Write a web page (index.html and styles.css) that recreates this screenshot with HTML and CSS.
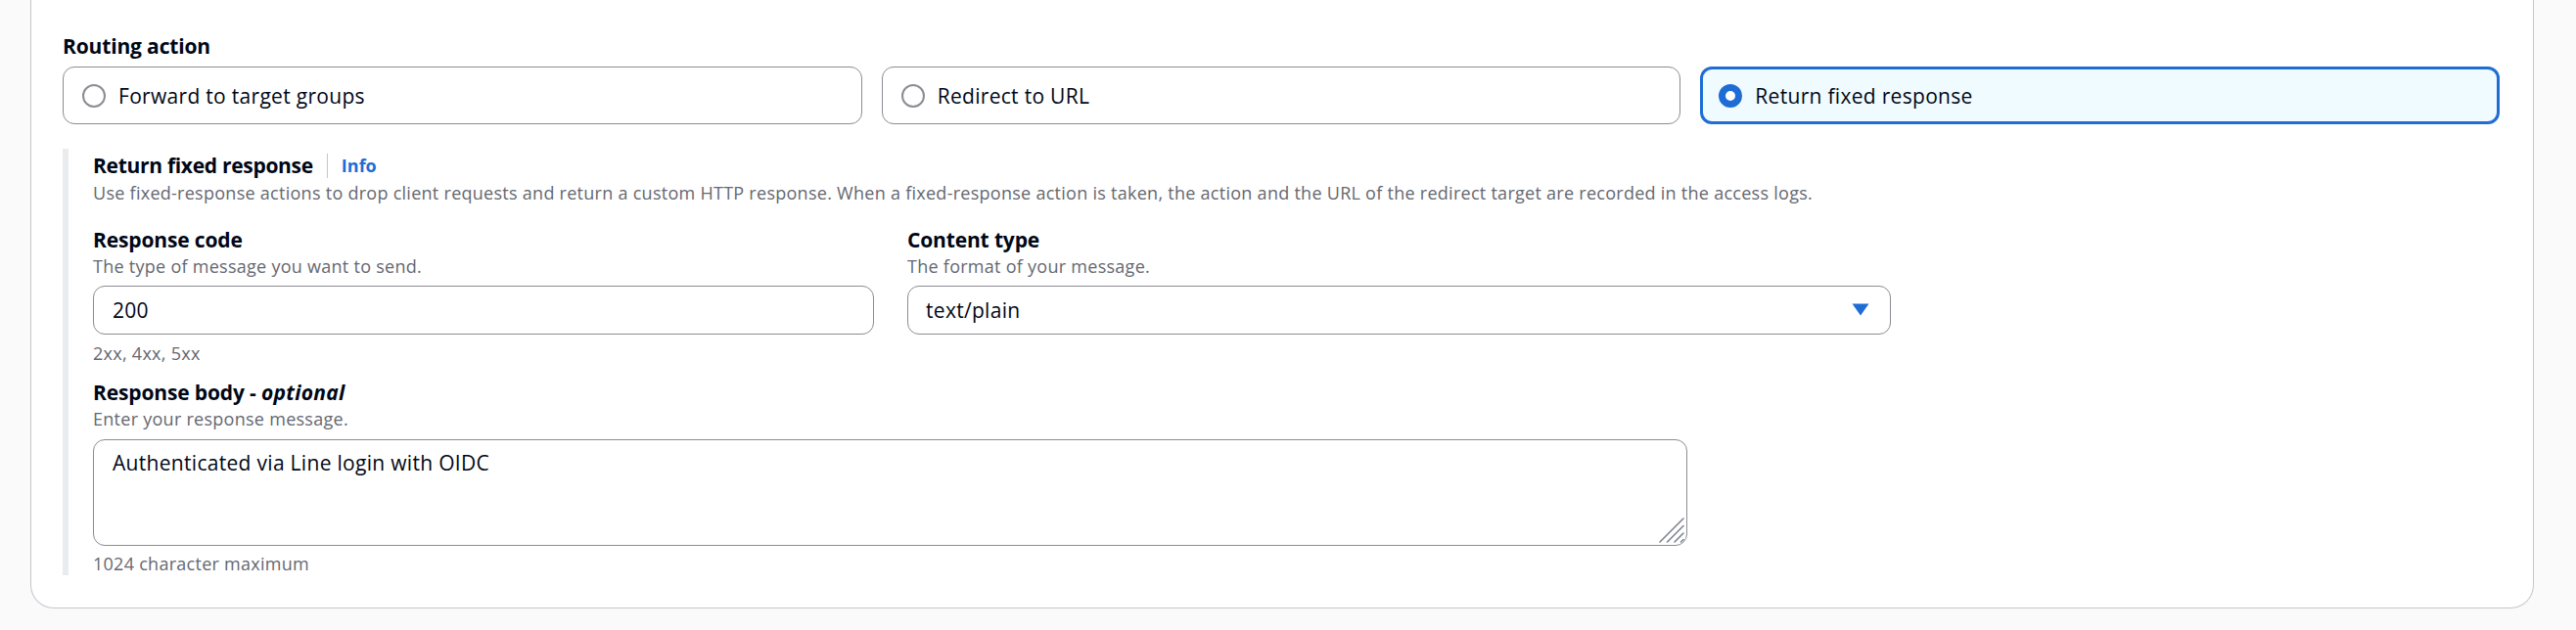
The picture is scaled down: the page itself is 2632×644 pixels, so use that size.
FILE: index.html
```html
<!DOCTYPE html>
<html lang="en">
<head>
<meta charset="utf-8">
<title>Routing action</title>
<link rel="stylesheet" href="styles.css">
</head>
<body>
<section class="card">
  <div class="label">Routing action</div>
  <div class="tiles">
    <div class="tile"><span class="radio"></span><span class="tile-text">Forward to target groups</span></div>
    <div class="tile"><span class="radio"></span><span class="tile-text">Redirect to URL</span></div>
    <div class="tile selected"><span class="radio checked"></span><span class="tile-text">Return fixed response</span></div>
  </div>
  <div class="expand">
    <div class="header"><span class="title">Return fixed response</span><span class="sep"></span><span class="info">Info</span></div>
    <div class="desc">Use fixed-response actions to drop client requests and return a custom HTTP response. When a fixed-response action is taken, the action and the URL of the redirect target are recorded in the access logs.</div>
    <div class="row">
      <div class="col col-code">
        <div class="label">Response code</div>
        <div class="desc">The type of message you want to send.</div>
        <div class="control input">200</div>
        <div class="hint">2xx, 4xx, 5xx</div>
      </div>
      <div class="col col-type">
        <div class="label">Content type</div>
        <div class="desc">The format of your message.</div>
        <div class="control select"><span>text/plain</span>
          <svg class="caret" width="18" height="13" viewBox="0 0 18 13"><polygon points="0.5,0.5 17.5,0.5 9,12.5" fill="#1f6dd4"/></svg>
        </div>
      </div>
    </div>
    <div class="body-field">
      <div class="label">Response body - <i>optional</i></div>
      <div class="desc">Enter your response message.</div>
      <div class="control textarea">Authenticated via Line login with OIDC
        <svg class="grip" width="26" height="26" viewBox="0 0 26 26"><g stroke="#7d8590" stroke-width="1.6" stroke-linecap="round"><line x1="1" y1="25" x2="25" y2="1"/><line x1="8.5" y1="25" x2="25" y2="8.5"/><line x1="16" y1="25" x2="25" y2="16"/><line x1="22.5" y1="25" x2="25" y2="22.5"/></g></svg>
      </div>
      <div class="hint">1024 character maximum</div>
    </div>
  </div>
</section>
</body>
</html>
```

FILE: styles.css
```css
* { box-sizing: border-box; }
html, body { margin: 0; padding: 0; }
body {
  background: #fafafa;
  font-family: "Open Sans", "Noto Sans", sans-serif;
  color: #000716;
  font-size: 21px;
  line-height: 30px;
  letter-spacing: 0.3px;
  width: 2632px;
  height: 644px;
  overflow: hidden;
}
.card {
  margin: 0 43px 0 31px;
  background: #ffffff;
  border: 1px solid #c6c6cd;
  border-top: 0;
  border-radius: 0 0 24px 24px;
  padding: 32px 34px 33px 32px;
}
.label { font-weight: 700; font-size: 21px; line-height: 30px; letter-spacing: -0.15px; }
.label i { font-style: italic; letter-spacing: 0.3px; }
.tiles {
  display: grid;
  grid-template-columns: repeat(3, 1fr);
  gap: 20px;
  margin-top: 6px;
}
.tile {
  height: 59px;
  border: 1px solid #8c8c94;
  border-radius: 12px;
  display: flex;
  align-items: center;
  gap: 13px;
  padding-left: 19px;
  background: #ffffff;
}
.tile.selected {
  border: 3px solid #1f6dd4;
  background: #f0fbff;
  padding-left: 16px;
}
.radio {
  width: 24px;
  height: 24px;
  border-radius: 50%;
  border: 2px solid #8c8c94;
  background: #fff;
  flex: none;
}
.radio.checked {
  border: 7.5px solid #1f6dd4;
}
.expand {
  margin-top: 25px;
  border-left: 6px solid #e9ebed;
  padding: 2px 0 0 25px;
}
.header { display: flex; align-items: center; }
.title { font-weight: 700; font-size: 21px; line-height: 30px; letter-spacing: -0.3px; }
.sep { width: 1px; height: 25px; background: #c6c6cd; margin: 0 14px 0 14px; }
.info { font-weight: 700; font-size: 18px; color: #1f6dd4; letter-spacing: 0; }
.desc { font-size: 18px; line-height: 24px; color: #656871; letter-spacing: 0.27px; }
.header + .desc { margin-top: 1px; }
.row {
  display: grid;
  grid-template-columns: 798px 1005px;
  column-gap: 34px;
  margin-top: 20.5px;
  align-items: start;
}
.control {
  margin-top: 8.5px;
  border: 1px solid #8c8c94;
  border-radius: 12px;
  background: #fff;
  font-size: 21px;
  line-height: 30px;
  color: #000716;
}
.input { height: 50px; padding: 9px 19px; }
.select {
  height: 50px;
  padding: 9px 21px 0 18px;
  display: flex;
  justify-content: space-between;
  align-items: flex-start;
}
.caret { margin-top: 8px; }
.hint { margin-top: 6.5px; font-size: 18px; line-height: 24px; color: #656871; letter-spacing: 0.27px; }
.body-field { margin-top: 13.5px; }
.textarea {
  position: relative;
  margin-top: 9px;
  width: 1629px;
  height: 109px;
  padding: 7.5px 19px;
}
.grip { position: absolute; right: 2px; bottom: 2px; }
.body-field .hint { margin-top: 6px; }
```
